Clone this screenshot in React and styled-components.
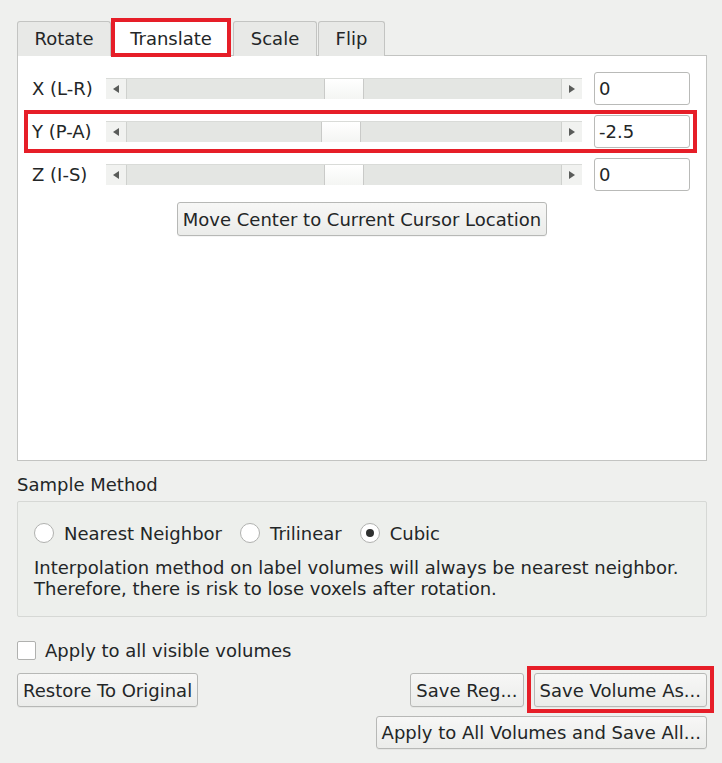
import React from "react";
import styled, { createGlobalStyle, css } from "styled-components";

const Global = createGlobalStyle`
  html, body { margin: 0; padding: 0; background: #eff0ee; }
  body { font-family: "DejaVu Sans", "Liberation Sans", sans-serif; font-size: 18px; color: #232627; }
  * { box-sizing: border-box; }
`;

const redBox = (inset) => css`
  position: relative;
  &::after {
    content: "";
    position: absolute;
    inset: ${inset};
    border: 4px solid #e61e28;
    pointer-events: none;
  }
`;

const Page = styled.div`
  width: 722px;
  height: 763px;
  padding: 21px 15px 0 17px;
  display: flex;
  flex-direction: column;
`;

const TabBar = styled.div`
  display: flex;
  align-items: flex-end;
  height: 34px;
  position: relative;
  z-index: 1;
`;

const Tab = styled.div`
  width: ${(p) => p.$w}px;
  margin-left: ${(p) => p.$ml || 0}px;
  height: 35px;
  margin-bottom: -1px;
  display: flex;
  align-items: center;
  justify-content: center;
  border: 1px solid #c3c4c2;
  border-bottom: none;
  border-radius: 3px 3px 0 0;
  background: #e8e9e7;
  padding-bottom: 1px;
  ${(p) =>
    p.$active &&
    css`
      background: #ffffff;
      border-color: #ffffff;
      ${redBox("-4px -4px -1px -4px")}
    `}
`;

const Pane = styled.div`
  height: 406px;
  background: #ffffff;
  border: 1px solid #c3c4c2;
  padding: 15px 13px 0 10px;
  display: flex;
  flex-direction: column;
`;

const Rows = styled.div`
  display: flex;
  flex-direction: column;
  gap: 8px;
`;

const Row = styled.div`
  height: 35px;
  display: flex;
  align-items: center;
  padding: 0 3px 0 4px;
  ${(p) => p.$marked && redBox("-4px")}
`;

const AxisLabel = styled.span`
  width: 74px;
  flex: none;
  white-space: nowrap;
`;

const SliderBar = styled.div`
  width: 476px;
  height: 21px;
  display: flex;
  border-top: 1px solid #d9dbd8;
  flex: none;
`;

const ArrowBtn = styled.div`
  width: 20px;
  flex: none;
  background: #f1f2f0;
  display: flex;
  align-items: center;
  justify-content: center;
  &::before {
    content: "";
    width: 0;
    height: 0;
    border-top: 4px solid transparent;
    border-bottom: 4px solid transparent;
    ${(p) =>
      p.$dir === "left"
        ? css`border-right: 6px solid #5a5c5a;`
        : css`border-left: 6px solid #5a5c5a;`}
  }
`;

const Track = styled.div`
  flex: 1;
  display: flex;
  background: #e4e6e3;
  border-left: 1px solid #cfd1ce;
  border-right: 1px solid #cfd1ce;
`;

const Handle = styled.div`
  width: 40px;
  flex: none;
  background: linear-gradient(#ffffff, #f4f5f3);
  border-left: 1px solid #c9cac8;
  border-right: 1px solid #c9cac8;
`;

const ValueInput = styled.div`
  width: 96px;
  height: 33px;
  margin-left: 12px;
  flex: none;
  background: #ffffff;
  border: 1px solid #b9bab8;
  border-radius: 3px;
  display: flex;
  align-items: center;
  padding-left: 4px;
`;

const PushButton = styled.div`
  height: ${(p) => p.$h || 34}px;
  padding: 0 5px;
  display: inline-flex;
  align-items: center;
  justify-content: center;
  white-space: nowrap;
  background: linear-gradient(#f7f7f6, #ebecea);
  border: 1px solid #b7b8b6;
  border-radius: 3px;
  box-shadow: 0 1px 0 rgba(0, 0, 0, 0.04);
  ${(p) => p.$marked && redBox("-8px -8px -7px -8px")}
`;

const CenterRow = styled.div`
  display: flex;
  justify-content: center;
  margin-top: 10px;
  padding-left: 3px;
`;

const SectionTitle = styled.div`
  margin-top: 14px;
  line-height: 20px;
`;

const GroupBox = styled.div`
  margin-top: 6px;
  height: 116px;
  border: 1px solid #d6d8d5;
  border-radius: 2px;
  background: #edefec;
  padding: 21px 0 0 16px;
`;

const RadioRow = styled.div`
  display: flex;
  align-items: center;
  height: 20px;
`;

const RadioItem = styled.label`
  display: flex;
  align-items: center;
  margin-right: 18px;
`;

const RadioCircle = styled.span`
  width: 20px;
  height: 20px;
  border-radius: 50%;
  border: 1px solid #b0b1af;
  background: #ffffff;
  margin-right: 10px;
  display: flex;
  align-items: center;
  justify-content: center;
  &::after {
    content: "";
    width: 8px;
    height: 8px;
    border-radius: 50%;
    background: ${(p) => (p.$on ? "#2f3131" : "transparent")};
  }
`;

const Note = styled.div`
  margin-top: 14px;
  line-height: 21px;
`;

const CheckRow = styled.label`
  margin-top: 24px;
  display: flex;
  align-items: center;
  height: 18px;
`;

const CheckBox = styled.span`
  width: 19px;
  height: 19px;
  background: #ffffff;
  border: 1px solid #b0b1af;
  border-radius: 2px;
  margin-right: 9px;
`;

const ButtonGrid = styled.div`
  margin-top: 14px;
  display: grid;
  grid-template-columns: auto 1fr auto auto;
  column-gap: 10px;
  row-gap: 9px;
  align-items: start;
`;

const WideCell = styled.div`
  grid-column: 2 / 5;
  display: flex;
  justify-content: flex-end;
`;

const Gap = styled.div``;

const axes = [
  { label: "X (L-R)", value: 0 },
  { label: "Y (P-A)", value: -2.5, marked: true },
  { label: "Z (I-S)", value: 0 },
];

function Slider({ value }) {
  const min = -160;
  const max = 160;
  const offset = ((value - min) / (max - min)) * (436 - 2 - 40);
  return (
    <SliderBar>
      <ArrowBtn $dir="left" />
      <Track>
        <div style={{ width: offset, flex: "none" }} />
        <Handle />
      </Track>
      <ArrowBtn $dir="right" />
    </SliderBar>
  );
}

export default function App() {
  return (
    <Page>
      <Global />
      <TabBar>
        <Tab $w={94}>Rotate</Tab>
        <Tab $w={114} $ml={3} $active>
          Translate
        </Tab>
        <Tab $w={84} $ml={5}>Scale</Tab>
        <Tab $w={67} $ml={1}>Flip</Tab>
      </TabBar>
      <Pane>
        <Rows>
          {axes.map((a) => (
            <Row key={a.label} $marked={a.marked}>
              <AxisLabel>{a.label}</AxisLabel>
              <Slider value={a.value} />
              <ValueInput>{a.value}</ValueInput>
            </Row>
          ))}
        </Rows>
        <CenterRow>
          <PushButton>Move Center to Current Cursor Location</PushButton>
        </CenterRow>
      </Pane>
      <SectionTitle>Sample Method</SectionTitle>
      <GroupBox>
        <RadioRow>
          <RadioItem>
            <RadioCircle />
            Nearest Neighbor
          </RadioItem>
          <RadioItem>
            <RadioCircle />
            Trilinear
          </RadioItem>
          <RadioItem>
            <RadioCircle $on />
            Cubic
          </RadioItem>
        </RadioRow>
        <Note>
          Interpolation method on label volumes will always be nearest neighbor.
          <br />
          Therefore, there is risk to lose voxels after rotation.
        </Note>
      </GroupBox>
      <CheckRow>
        <CheckBox />
        Apply to all visible volumes
      </CheckRow>
      <ButtonGrid>
        <PushButton>Restore To Original</PushButton>
        <Gap />
        <PushButton>Save Reg...</PushButton>
        <PushButton $marked>Save Volume As...</PushButton>
        <Gap />
        <WideCell>
          <PushButton $h={33}>Apply to All Volumes and Save All...</PushButton>
        </WideCell>
      </ButtonGrid>
    </Page>
  );
}
